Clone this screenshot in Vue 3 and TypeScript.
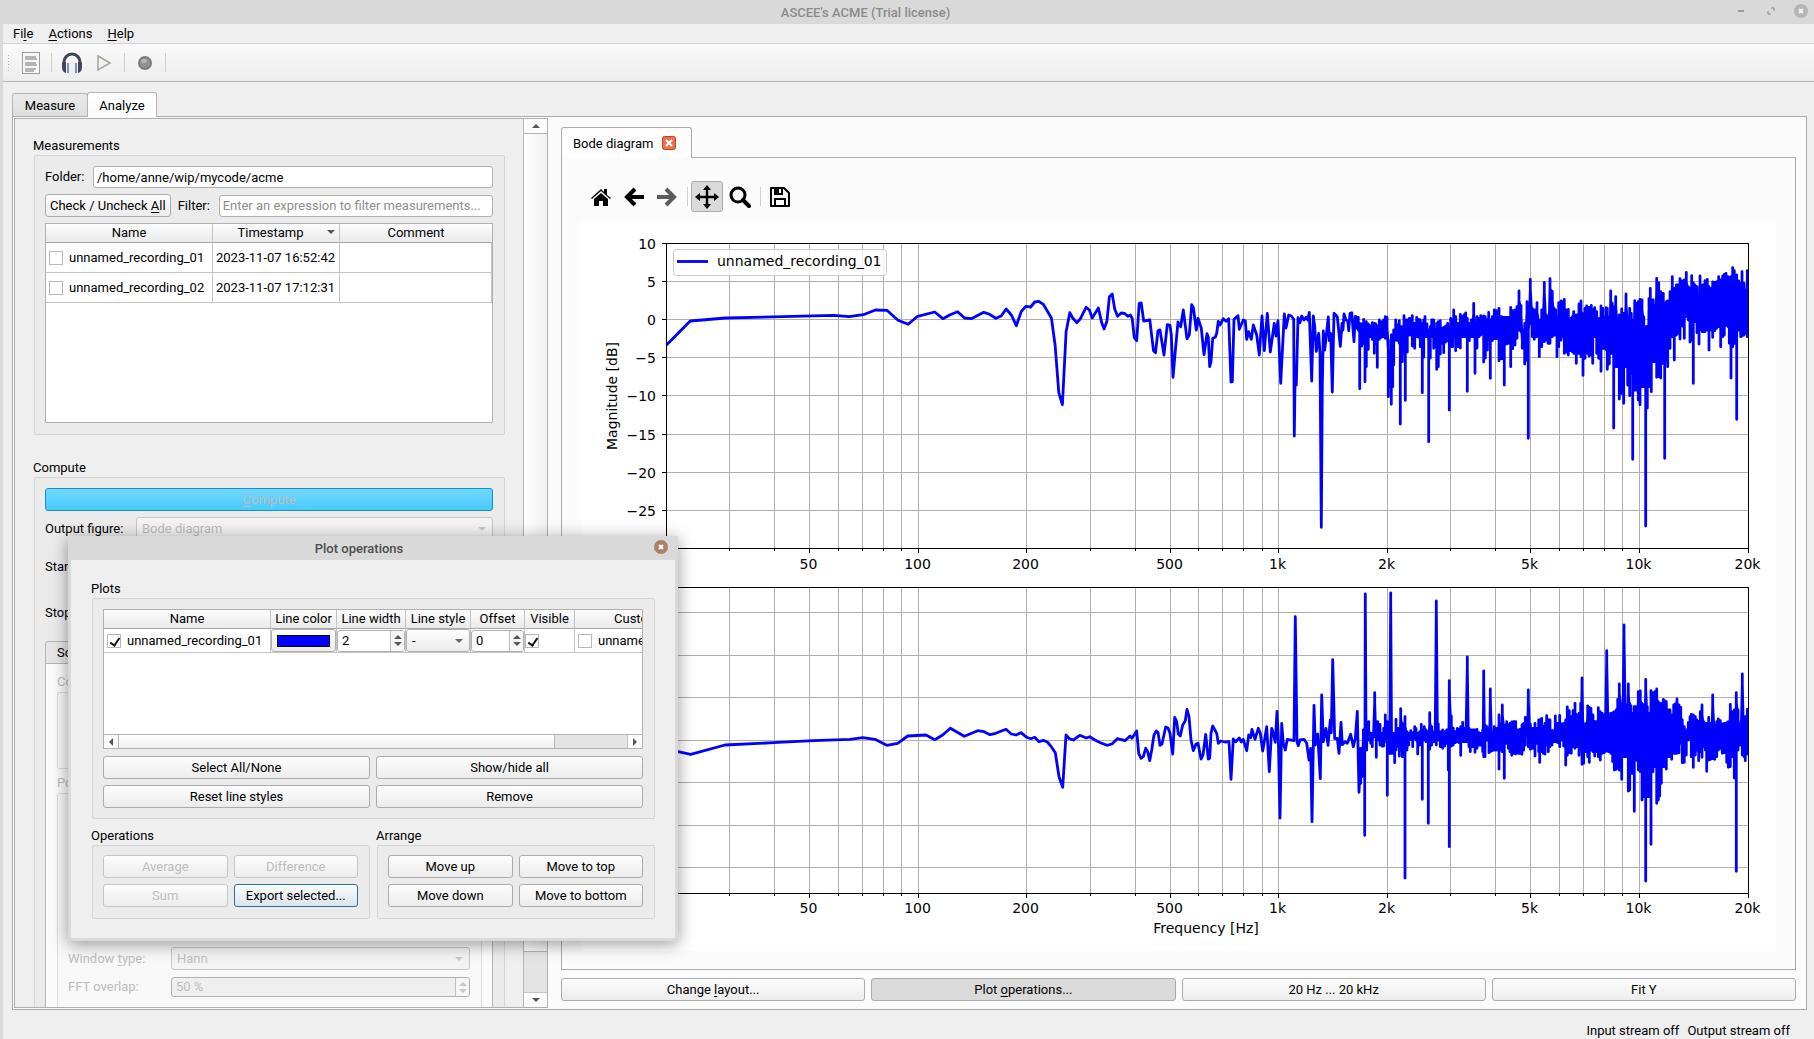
<script setup lang="ts">
import { ref } from 'vue'

type Pair = [number, number]

const LEFT = 666
const RIGHT = 1748
const DECADE = (RIGHT - LEFT) / 3

const freqX = (f: number): number =>
  Math.floor(LEFT + Math.log10(f / 20) * DECADE) + 0.5

const gridFreqs: number[] = [1, 2, 3, 4, 5, 6, 7, 8, 9]
  .flatMap((n) => [n * 10, n * 100, n * 1000])
  .filter((f) => f > 20)
  .concat([10000])

const majors: { f: number; label: string }[] = [
  { f: 50, label: '50' },
  { f: 100, label: '100' },
  { f: 200, label: '200' },
  { f: 500, label: '500' },
  { f: 1000, label: '1k' },
  { f: 2000, label: '2k' },
  { f: 5000, label: '5k' },
  { f: 10000, label: '10k' },
  { f: 20000, label: '20k' },
]
const isMajor = (f: number): boolean => majors.some((m) => m.f === f)

const magTicks: { y: number; label: string }[] = [
  { y: 243.5, label: '10' },
  { y: 281.5, label: '5' },
  { y: 319.5, label: '0' },
  { y: 357.5, label: '−5' },
  { y: 395.5, label: '−10' },
  { y: 434.5, label: '−15' },
  { y: 472.5, label: '−20' },
  { y: 510.5, label: '−25' },
]
const phaseTicks: number[] = [612.5, 655.5, 697.5, 740.5, 782.5, 825.5, 867.5]

// Samples are packed as integers: "x y" pairs for single samples,
// "x top bottom" triples for the dense upper part of the band.
const unpack = (s: string, n: number): number[][] => {
  const v = s.trim().split(/\s+/).map(Number)
  const out: number[][] = []
  for (let i = 0; i + n <= v.length; i += n) out.push(v.slice(i, i + n))
  return out
}
const line = (s: string, x0: number, y0: number, sx = 3): Pair[] =>
  unpack(s, 2).map(([x, y]) => [x0 + x / sx, y0 + y / 3])

// Every triple is a vertical stroke; a second stroke half way to the next one
// covers the range that both neighbours share.
const band = (s: string, x0: number, y0: number): Pair[] => {
  const cols = unpack(s, 3)
  return cols.flatMap(([x, t, b], i): Pair[] => {
    const px = x0 + x / 3
    const mid = y0 + (t + Math.min(b, t + 60)) / 6
    const out: Pair[] = [[px, mid], [px, y0 + t / 3], [px, y0 + b / 3], [px, mid]]
    const next = cols[i + 1]
    if (next) {
      const hx = x0 + (x + next[0]) / 6
      const top = Math.max(t, next[1])
      const bottom = Math.min(b, next[2])
      if (bottom > top) {
        out.push([hx, y0 + top / 3], [hx, y0 + bottom / 3], [hx, y0 + (top + bottom) / 6])
      }
    }
    return out
  })
}
const poly = (p: Pair[]): string =>
  p.map(([x, y]) => `${x.toFixed(1)},${y.toFixed(1)}`).join(' ')

const mag = poly([
  ...line(`310 705 368 633 455 624 720 616 757 620 792 614 822 600 850 601 877 631 902 643 925 619
  967 606 987 626 1005 614 1023 605 1040 624 1057 626 1087 607 1100 612 1117 625 1130 618 1142 597
  1155 615 1167 647 1179 605 1190 589 1202 591 1212 576 1222 574 1233 583 1253 624 1262 705 1271 848
  1280 884 1289 665 1298 608 1305 624 1315 638 1323 628 1338 592 1346 600 1353 624 1368 594 1376 637
  1382 657 1389 634 1395 560 1402 552 1408 597 1415 619 1424 609 1432 610 1440 619 1446 615 1451 625
  1456 683 1462 692 1468 580 1473 579 1479 633 1494 630 1503 722 1508 728 1514 662 1518 660`, 540, 110, 2.45),
  ...line(`0 330 12 405 22 314 30 316 34 345 39 472 47 380 54 306 62 320 70 270 81 356 88 345 95 254
  100 262 109 330 114 295 124 325 132 404 141 341 145 350 149 440 153 425 158 355 166 352 170 340
  175 304 180 315 190 296 198 304 206 296 213 486 217 485 222 298 234 287 238 328 250 300 256 302
  260 358 266 335 274 358 280 315 290 345 298 405 306 288 313 392 322 280 331 396 343 310 348 348
  354 302 362 490 373 282 378 324 386 285 394 288 401 298 403 648 405 490 409 495 414 293 420 308
  425 288 432 300 438 292 443 300 448 277 455 483 460 288 464 320 469 394 476 340 480 400 484 922
  487 500 490 333 494 390 505 291 508 362 512 340 517 516 522 280 532 290 541 379 546 310 549 330
  552 282 558 300 563 302 566 332 570 280 575 278 582 365 586 289`, 1160, 220),
  ...band(`588 290 325 595 292 330 599 310 506 605 312 378 611 298 370 615 320 485 619 305 440
  625 312 388 632 318 350 637 308 358 643 310 400 647 312 370 652 318 442 658 300 358 665 305 352
  671 300 350 676 290 355 681 292 350 685 360 530 691 400 500 694 345 553 698 345 500 701 330 435
  707 300 360 713 315 362 718 302 370 721 320 612 727 320 425 732 287 400 736 300 541 742 300 396
  748 295 345 757 287 378 764 310 385 770 292 350 776 298 352 781 300 380 787 310 518 791 300 412
  795 290 350 801 312 350 806 330 665 811 320 414 815 300 350 821 300 385 826 330 380 830 310 448
  835 305 440 841 302 402 846 325 370 851 322 398 857 318 366 863 310 362 868 320 570 872 295 380
  878 300 380 881 270 350 887 290 392 893 310 380 901 283 384 907 290 350 912 285 350 917 279 350
  922 295 514 928 310 362 934 300 350 941 250 350 945 310 460 951 290 384 957 295 350 962 287 345
  966 290 340 971 288 426 976 290 414 982 300 390 986 277 360 991 300 475 997 290 362 1003 270 356
  1009 272 356`, 1160, 220),
  ...band(`57 265 422 65 290 416 73 292 495 79 292 372 85 292 370 92 262 440 98 272 386 105 270 375
  111 260 355 117 213 330 123 256 335 127 330 385 134 310 432 141 245 420 145 300 655 151 178 310
  157 265 350 163 270 358 171 248 350 178 300 410 185 270 380 193 187 365 199 285 360 204 290 370
  210 176 370 217 214 350 222 265 345 227 270 345 231 290 410 236 248 380 243 243 360 248 245 350
  253 238 400 259 270 396 265 268 405 271 295 392 277 290 395 281 275 400 289 285 430 297 252 400
  303 243 410 309 282 466 315 265 415 320 258 400 327 262 408 334 256 405 338 268 430 344 263 350
  350 275 400 356 295 415 363 258 454 369 265 385 375 290 385 379 263 390 382 265 448 388 290 432
  392 213 400 397 250 400 401 260 624 407 230 440 413 300 440 418 285 537 425 267 520 431 280 550
  438 222 440 443 290 495 449 265 527 454 280 460 458 300 718 464 242 510 470 250 510 475 245 540
  480 238 554 486 240 500 491 290 500 497 320 918 502 320 564 507 235 500 511 205 500 514 240 515
  520 240 425 525 255 425 530 175 472 536 188 470 542 215 474 550 220 430 554 250 715 559 245 420
  563 243 440 570 215 385 577 170 350 583 205 420 589 195 345 594 195 340 600 176 357 607 183 318
  613 180 355 619 157 290 625 200 300 630 205 366 635 167 360 640 188 490 645 195 305 651 200 338
  657 220 372 660 168 330 667 195 335 675 182 335 682 178 330 687 200 390 694 205 330 698 186 352
  704 187 332 710 185 325 716 170 320 722 180 380 728 168 350 733 163 345 738 160 315 744 170 320
  748 173 370 753 170 474 758 143 380 763 152 370 770 165 598 776 183 330 782 190 350 786 155 348
  792 190 345 797 210 340 802 152 350`, 1480, 220),
])

const phase = poly([
  ...line(`20 568 54 575 92 583 195 555 340 548 460 542 570 538 608 533 645 538 680 556 713 550 743 528
  798 525 824 539 848 525 871 505 913 529 953 512 972 515 990 524 1007 520 1038 508 1054 522 1068 525
  1083 518 1100 532 1112 536 1124 532 1137 545 1150 541 1162 546 1174 560 1186 578 1197 650 1208 682
  1218 525 1228 536 1240 540 1259 526 1279 534 1289 530 1310 543 1323 549 1341 556 1356 552 1372 536
  1395 542 1410 528 1416 535 1430 513 1436 580 1443 595 1450 590 1457 565 1463 575 1469 602 1475 570
  1482 525 1489 513 1494 517`, 660, 560),
  ...line(`0 526 6 522 17 471 24 474 30 490 38 552 44 442 50 455 55 492 61 498 68 465 76 452 81 418
  87 440 93 510 100 542 108 522 114 520 123 567 129 555 137 493 145 567 149 565 153 490 158 468
  170 490 175 520 182 513 195 516 207 515 213 628 220 507 227 515 238 504 244 516 250 508 260 542
  266 495 272 503 276 478 285 508 295 475 301 490 308 543 320 470 328 605 335 475 340 490 346 517
  351 424 355 500 360 744 365 460 370 520 376 540 382 508 402 512 406 140 411 515 415 527 420 510
  432 508 440 520 447 570 452 535 456 755 462 406 466 525 473 492 481 626 485 375 490 515 498 475
  504 526 511 450 514 488 518 269 524 506 532 505 537 550 543 457 547 524 555 515 562 520 572 493
  580 530 586 505 592 424 597 667`, 1160, 570),
  ...band(`602 535 640 606 545 620 610 480 565 614 480 796 616 72 500 620 480 540 626 455 510
  632 490 520 637 490 530 644 368 500 649 480 562 653 455 510 660 463 525 666 490 528 671 475 528
  676 435 515 682 455 676 687 490 550 692 69 550 697 490 550 704 490 578 708 448 540 714 475 528
  718 480 558 722 416 540 727 460 560 731 490 560 735 440 924 741 485 540 746 490 525 752 482 508
  758 488 530 764 470 505 768 475 510 773 490 552 779 485 525 784 463 515 787 480 688 793 470 510
  798 480 515 805 485 760 809 428 538 815 470 525 822 485 515 829 93 525 835 462 510 841 485 530
  848 480 535 854 485 528 860 480 520 865 478 600 868 332 830 874 438 528 880 475 525 886 485 518
  892 475 515 897 478 518 902 470 556 908 457 515 914 475 515 922 261 515 927 475 530 931 480 545
  937 480 530 945 480 547 951 478 535 957 488 525 963 490 525 968 480 545 971 303 560 975 465 560
  981 470 510 987 480 548 991 357 545 997 485 542 1003 470 540 1010 475 540`, 1160, 570),
  ...band(`57 435 597 62 460 540 67 405 545 73 465 625 80 455 520 85 465 535 90 460 545 95 456 556
  101 455 550 107 455 552 114 480 550 120 478 550 126 465 553 131 460 540 136 442 525 141 450 500
  145 360 530 151 462 538 157 475 535 165 460 558 171 475 520 176 450 545 179 450 577 185 445 545
  190 470 550 195 460 552 200 437 525 205 450 545 210 450 530 216 482 525 221 482 515 226 438 515
  233 460 518 239 436 530 245 462 510 251 460 528 257 450 585 262 411 556 268 422 548 274 440 550
  279 422 530 285 400 535 291 435 530 297 430 556 302 400 540 306 324 583 311 465 580 317 460 545
  323 408 560 328 412 577 333 415 540 339 435 545 344 455 558 350 455 545 355 413 560 361 425 570
  367 430 550 373 435 548 380 242 543 386 432 545 392 430 550 398 428 575 403 425 600 409 420 598
  413 388 595 418 342 600 425 405 628 432 165 560 438 405 560 445 342 663 449 400 660 453 407 610
  458 430 610 463 410 724 469 410 570 475 365 600 481 363 605 486 400 690 491 405 680 497 328 933
  502 410 680 508 430 680 513 362 823 519 368 605 525 365 590 530 357 700 535 395 690 539 400 678
  544 400 640 550 388 590 555 393 590 559 395 597 565 420 560 570 420 560 575 435 568 581 405 550
  586 402 550 591 387 550 597 405 548 602 412 520 607 450 578 613 470 577 619 480 555 625 458 510
  630 440 508 634 433 560 640 435 592 646 440 555 651 450 540 656 455 572 661 425 545 666 405 562
  671 455 530 676 460 540 680 460 604 686 442 570 692 460 568 698 375 566 704 465 568 710 455 560
  715 447 540 721 452 535 727 462 550 733 460 548 740 458 577 745 455 592 751 403 590 757 425 560
  763 420 624 769 368 904 774 420 540 780 465 525 787 312 555 792 460 560 796 440 572 802 418 552`, 1480, 570),
])

const folder = ref('/home/anne/wip/mycode/acme')
const filter = ref('')
const recordings = ref([
  { name: 'unnamed_recording_01', time: '2023-11-07 16:52:42', on: false },
  { name: 'unnamed_recording_02', time: '2023-11-07 17:12:31', on: false },
])
const plot = ref({ on: true, width: '2', offset: '0', visible: true, custom: false })
</script>

<template>
  <div class="app">
    <header class="titlebar">
      <h1>ASCEE's ACME (Trial license)</h1>
      <div class="wm">
        <button aria-label="Minimize"><svg width="14" height="14"><path d="M4 7h6" stroke="#9a9a9a" stroke-width="2" /></svg></button>
        <button aria-label="Restore"><svg width="14" height="14"><path d="M7 4h3v3M4 7v3h3" fill="none" stroke="#8a8a8a" stroke-width="1" /></svg></button>
        <button aria-label="Close"><svg width="14" height="14"><circle cx="7" cy="7" r="7" fill="#b5b5b5" /><path d="M5 5l4 4M9 5l-4 4" stroke="#f2f2f2" stroke-width="2" /></svg></button>
      </div>
    </header>
    <nav class="menubar">
      <button>Fi<u>l</u>e</button>
      <button><u>A</u>ctions</button>
      <button><u>H</u>elp</button>
    </nav>
    <div class="toolbar">
      <i class="grip"></i>
      <button class="tool" aria-label="Log">
        <svg width="18" height="22"><rect x="0.5" y="0.5" width="17" height="21" fill="#f7f7f7" stroke="#9c9c9c" /><path d="M3 5h11M3 7h12M3 11h11M3 13h12M3 17h11M3 19h9" stroke="#b4b4b4" stroke-width="2" /></svg>
      </button>
      <i class="sep"></i>
      <button class="tool" aria-label="Monitor">
        <svg width="22" height="22" viewBox="0 0 22 22"><path d="M3 13V10a8 8 0 0 1 16 0v3" fill="none" stroke="#3f465c" stroke-width="3" /><path d="M1 11q1-2 4-1v11Q1 20 1 15zM21 11q-1-2-4-1v11q4-1 4-6z" fill="#3f465c" /><path d="M6 11h2v10H6zM14 11h2v10h-2z" fill="#8390ad" /></svg>
      </button>
      <button class="tool" aria-label="Play">
        <svg width="16" height="18"><path d="M2 2L14 9L2 16z" fill="#f4f4ee" stroke="#a3a3a0" stroke-width="1.5" /></svg>
      </button>
      <i class="sep"></i>
      <button class="tool" aria-label="Record">
        <svg width="16" height="16"><circle cx="8" cy="8" r="7" fill="#7c7c7c" /><circle cx="8" cy="8" r="5" fill="#929292" /><ellipse cx="7" cy="6" rx="3" ry="2" fill="#b5b5b5" /></svg>
      </button>
      <i class="sep"></i>
    </div>

    <div class="maintabs">
      <button class="mtab">Measure</button>
      <button class="mtab on">Analyze</button>
    </div>

    <main class="page">
      <section class="side">
        <div class="sidebody">
          <h2 class="glabel">Measurements</h2>
          <div class="group stack measure">
            <div class="row">
              <label for="folder">Folder:</label>
              <input id="folder" v-model="folder" class="field" type="text" />
            </div>
            <div class="row filter">
              <button class="btn">Check / Uncheck <u>A</u>ll</button>
              <label for="filter">Filter:</label>
              <input id="filter" v-model="filter" class="field" type="text" placeholder="Enter an expression to filter measurements..." />
            </div>
            <div class="tablebox">
              <table class="rec">
                <thead>
                  <tr><th class="c-name">Name</th><th class="c-time">Timestamp<i class="tri down"></i></th><th>Comment</th></tr>
                </thead>
                <tbody>
                  <tr v-for="r in recordings" :key="r.name">
                    <td><label class="check"><input v-model="r.on" type="checkbox" />{{ r.name }}</label></td>
                    <td class="time">{{ r.time }}</td>
                    <td></td>
                  </tr>
                </tbody>
              </table>
            </div>
          </div>

          <h2 class="glabel second">Compute</h2>
          <div class="group stack compute">
            <button class="btn primary" disabled><u>C</u>ompute</button>
            <div class="row">
              <label class="wide" for="outfig">Output figure:</label>
              <span class="combo grow"><select id="outfig" disabled><option>Bode diagram</option></select></span>
            </div>
            <div class="plain">Start</div>
            <div class="plain stop">Stop</div>
            <div class="subtabs">
              <button class="subtab">Sc</button>
              <div class="subpane">
                <h3 class="dim">Co</h3>
                <div class="group lite first"></div>
                <h3 class="dim next">Po</h3>
                <div class="group lite post">
                  <label for="win">Window <u>t</u>ype:</label>
                  <span class="combo"><select id="win" disabled><option>Hann</option></select></span>
                  <label for="ovl">FFT overlap:</label>
                  <span class="spin off"><input id="ovl" type="text" value="50 %" disabled /><span class="arrows"><i class="tri up"></i><i class="tri down"></i></span></span>
                </div>
              </div>
            </div>
          </div>
        </div>
        <div class="vbar" aria-hidden="true">
          <span class="cap"><i class="tri up"></i></span>
          <span class="thumb"></span>
          <span class="groove"></span>
          <span class="cap"><i class="tri down"></i></span>
        </div>
      </section>

      <section class="work">
        <div class="figtab">
          <span>Bode diagram</span>
          <button class="x" aria-label="Close tab"><svg width="14" height="14"><rect x="0.5" y="0.5" width="13" height="13" rx="2" fill="#e2744f" stroke="#d23c22" /><path d="M4 4l6 6M10 4l-6 6" stroke="#fff" stroke-width="2" /></svg></button>
        </div>
        <div class="figpane">
          <div class="figtools">
            <button aria-label="Home"><svg width="22" height="22" viewBox="0 0 22 22"><path d="M1 12L11 3l3 3V3h3v6l4 3-1 1-9-8-9 8z" /><path d="M4 13l7-6 7 6v7h-5v-5H9v5H4z" /></svg></button>
            <button aria-label="Back"><svg width="22" height="22" viewBox="0 0 22 22"><path d="M12 3L4 11l8 8M5 11h16" fill="none" stroke="#000" stroke-width="4" /></svg></button>
            <button aria-label="Forward"><svg width="22" height="22" viewBox="0 0 22 22"><path d="M10 3l8 8-8 8M17 11H1" fill="none" stroke="#5c5c5c" stroke-width="4" /></svg></button>
            <i class="sep"></i>
            <button class="down" aria-label="Pan"><svg width="24" height="24" viewBox="0 0 24 24"><path d="M12 3v18M3 12h18" stroke="#000" stroke-width="2.4" /><path d="M12 0l4 5H8zM12 24l4-5H8zM0 12l5-4v8zM24 12l-5-4v8z" /></svg></button>
            <button aria-label="Zoom"><svg width="22" height="22" viewBox="0 0 22 22"><circle cx="9" cy="9" r="7" fill="none" stroke="#000" stroke-width="3" /><path d="M14 14l6 6" stroke="#000" stroke-width="4" stroke-linecap="round" /></svg></button>
            <i class="sep"></i>
            <button aria-label="Save"><svg width="22" height="22" viewBox="0 0 22 22"><path d="M2 2h13l5 5v13H2z" fill="none" stroke="#000" stroke-width="2" stroke-linejoin="round" /><path d="M5 2h9v7H5z" /><path d="M10 3h2v4h-2z" fill="#fff" /><path d="M6 20v-7h10v7" fill="none" stroke="#000" stroke-width="2" /></svg></button>
          </div>
          <svg class="canvas" viewBox="581 222 1195 729" role="img" aria-label="Bode diagram">
            <g stroke="#b0b0b0">
              <template v-for="f in gridFreqs" :key="f">
                <line :x1="freqX(f)" :x2="freqX(f)" y1="244" y2="548" />
                <line :x1="freqX(f)" :x2="freqX(f)" y1="588" y2="893" />
              </template>
              <line v-for="t in magTicks" :key="t.y" x1="667" x2="1748" :y1="t.y" :y2="t.y" />
              <line v-for="y in phaseTicks" :key="y" x1="667" x2="1748" :y1="y" :y2="y" />
            </g>
            <g stroke="#000">
              <template v-for="f in gridFreqs" :key="f">
                <line :x1="freqX(f)" :x2="freqX(f)" y1="548" :y2="isMajor(f) ? 553 : 551" />
                <line :x1="freqX(f)" :x2="freqX(f)" y1="893" :y2="isMajor(f) ? 898 : 896" />
              </template>
              <path d="M1748.5 548v5M1748.5 893v5" />
              <line v-for="t in magTicks" :key="t.y" x1="662" x2="667" :y1="t.y" :y2="t.y" />
            </g>
            <polyline class="trace" :points="mag" />
            <polyline class="trace" :points="phase" />
            <rect class="frame" x="666.5" y="243.5" width="1082" height="305" />
            <rect class="frame" x="666.5" y="587.5" width="1082" height="306" />
            <rect x="673.5" y="249.5" width="213" height="26" rx="3" fill="#fff" fill-opacity="0.8" stroke="#ccc" />
            <path class="trace" d="M677 261.5h31" />
            <text x="717" y="266">unnamed_recording_01</text>
            <g text-anchor="end">
              <text v-for="t in magTicks" :key="t.y" x="656" :y="t.y + 5">{{ t.label }}</text>
            </g>
            <g text-anchor="middle">
              <template v-for="m in majors" :key="m.f">
                <text :x="freqX(m.f) - 1" y="569">{{ m.label }}</text>
                <text :x="freqX(m.f) - 1" y="913">{{ m.label }}</text>
              </template>
              <text x="1206" y="933">Frequency [Hz]</text>
              <text transform="translate(617 396) rotate(-90)">Magnitude [dB]</text>
            </g>
          </svg>
        </div>
        <div class="actions">
          <button class="btn">Change <u>l</u>ayout...</button>
          <button class="btn pressed">Plot <u>o</u>perations...</button>
          <button class="btn">20 Hz ... 20 kHz</button>
          <button class="btn">Fit Y</button>
        </div>
      </section>
    </main>

    <footer class="status"><span>Input stream off</span><span>Output stream off</span></footer>

    <div class="dialog" role="dialog" aria-labelledby="dlg-title">
      <header class="dlgbar">
        <h2 id="dlg-title">Plot operations</h2>
        <button class="x" aria-label="Close"><svg width="14" height="14"><circle cx="7" cy="7" r="7" fill="#a98268" /><path d="M5 5l4 4M9 5l-4 4" stroke="#fff" stroke-width="2" /></svg></button>
      </header>
      <div class="dlgbody">
        <h3 class="glabel">Plots</h3>
        <div class="group stack">
          <div class="plotbox">
            <table class="plots">
              <thead>
                <tr>
                  <th class="p1">Name</th><th class="p2">Line color</th><th class="p3">Line width</th><th class="p4">Line style</th><th class="p5">Offset</th><th class="p6">Visible</th><th class="p7">Custo</th>
                </tr>
              </thead>
              <tbody>
                <tr>
                  <td><label class="check"><input v-model="plot.on" type="checkbox" />unnamed_recording_01</label></td>
                  <td><button class="color" aria-label="Line color"><i></i></button></td>
                  <td><span class="spin"><input v-model="plot.width" type="text" aria-label="Line width" /><span class="arrows"><i class="tri up"></i><i class="tri down"></i></span></span></td>
                  <td><span class="combo"><select aria-label="Line style"><option>-</option></select></span></td>
                  <td><span class="spin"><input v-model="plot.offset" type="text" aria-label="Offset" /><span class="arrows"><i class="tri up"></i><i class="tri down"></i></span></span></td>
                  <td><label class="check bare"><input v-model="plot.visible" type="checkbox" aria-label="Visible" /></label></td>
                  <td><label class="check"><input v-model="plot.custom" type="checkbox" />unname</label></td>
                </tr>
              </tbody>
            </table>
            <div class="hbar" aria-hidden="true">
              <span class="cap"><i class="tri left"></i></span><span class="thumb"></span><span class="groove"></span><span class="cap"><i class="tri right"></i></span>
            </div>
          </div>
          <div class="pair">
            <button class="btn">Select All/None</button>
            <button class="btn">Show/hide all</button>
            <button class="btn">Reset line styles</button>
            <button class="btn">Remove</button>
          </div>
        </div>
        <div class="halves">
          <div>
            <h3 class="glabel">Operations</h3>
            <div class="group pair">
              <button class="btn" disabled>Average</button>
              <button class="btn" disabled>Difference</button>
              <button class="btn" disabled>Sum</button>
              <button class="btn focus">Export selected...</button>
            </div>
          </div>
          <div>
            <h3 class="glabel">Arrange</h3>
            <div class="group pair">
              <button class="btn">Move up</button>
              <button class="btn">Move to top</button>
              <button class="btn">Move down</button>
              <button class="btn">Move to bottom</button>
            </div>
          </div>
        </div>
      </div>
    </div>
  </div>
</template>

<style>
html, body { margin: 0; background: #efefef; }
</style>

<style scoped>
.app, .app * { box-sizing: border-box; }
.app {
  position: relative; display: flex; flex-direction: column; height: 100vh; overflow: hidden;
  border-left: 3px solid #d9d9d9; background: #efefef; color: #000;
  font: 13px/20px Roboto, "Noto Sans", sans-serif;
}
h1, h2, h3 { margin: 0; font-size: 13px; font-weight: 400; line-height: 20px; }
button, input, select { margin: 0; font: inherit; color: inherit; }
button { padding: 0; border: 0; background: none; white-space: nowrap; }
u { text-underline-offset: 2px; }
svg { display: block; }

.titlebar { position: relative; height: 24px; flex: none; background: #d9d9d9; text-align: center; }
.titlebar h1 { line-height: 26px; font-weight: 500; color: #8b8b8b; padding-right: 86px; }
.wm { position: absolute; right: 6px; top: 4px; display: flex; gap: 16px; }
.menubar { display: flex; flex: none; gap: 15px; height: 20px; padding-left: 10px; border-bottom: 1px solid #d2d2d2; }
.toolbar { display: flex; flex: none; align-items: center; gap: 8px; height: 38px; padding-left: 4px; border-bottom: 1px solid #b4b4b4; background: linear-gradient(#fafafa, #ededed); }
.grip { width: 4px; height: 17px; background: radial-gradient(circle, #b5b5b5 1px, transparent 1px) 0 0 / 3px 3px; }
.tool { display: grid; place-items: center; width: 24px; height: 26px; }
.sep { width: 1px; height: 19px; background: #cfcfcf; }

.maintabs { display: flex; flex: none; align-items: flex-end; height: 34px; padding-left: 9px; }
.mtab { height: 23px; width: 76px; padding-top: 2px; border: 1px solid #b4b4b4; border-bottom: 0; border-radius: 3px 3px 0 0; background: linear-gradient(#eaeaea, #dedede); line-height: 20px; }
.mtab.on { position: relative; z-index: 1; width: 70px; height: 25px; margin: 0 0 -1px -1px; background: linear-gradient(#fff, #fbfbfb); }

.page { display: flex; flex: 1; min-height: 0; margin: 0 7px 0 9px; border: 1px solid #ababab; background: #fbfbfb; }
.side { display: flex; flex: none; width: 534px; margin: 1px; border: 1px solid #b0b0b0; background: #efefef; overflow: hidden; }
.sidebody { flex: 1; min-width: 0; padding: 16px 18px 0; overflow: hidden; }
.vbar { display: flex; flex-direction: column; width: 24px; border-left: 1px solid #b4b4b4; }
.vbar .cap { display: grid; place-items: center; height: 14px; background: #fbfbfb; }
.vbar .thumb { flex: 821; border: solid #b4b4b4; border-width: 1px 0; background: linear-gradient(90deg, #fff, #f0f0f0); }
.vbar .groove { flex: 40; border-bottom: 1px solid #c4c4c4; background: #e4e4e4; }

.tri { width: 0; height: 0; border: 4px solid transparent; }
.tri.up { border-bottom-color: #555; border-top: 0; }
.tri.down { border-top-color: #555; border-bottom: 0; }
.tri.left { border-right-color: #555; border-left: 0; }
.tri.right { border-left-color: #555; border-right: 0; }

.glabel { height: 20px; line-height: 22px; }
.group { margin-left: 1px; padding: 10px 11px 10px 10px; border: 1px solid #d5d5d5; border-radius: 2px; background: #ebebeb; }
.stack { display: flex; flex-direction: column; gap: 6px; }
.measure { padding-bottom: 11px; }
.second { margin-top: 22px; }
.row { display: flex; align-items: center; gap: 7px; height: 23px; }
.row label { flex: none; min-width: 41px; }
.row.filter label { min-width: 34px; }
.row .wide { min-width: 84px; }
.measure .row:first-child { height: 22px; }
.field { flex: 1; min-width: 0; height: 22px; padding: 0 3px; border: 1px solid #b0b0b0; border-radius: 3px; background: #fff; outline: 0; }
.field::placeholder { color: #8e8e8e; opacity: 1; }
.btn { height: 23px; padding: 0 4px; border: 1px solid #ababab; border-radius: 3px; background: linear-gradient(#fdfdfd, #ececec); line-height: 21px; }
.btn:disabled { border-color: #c6c6c6; color: #bdbdbd; }
.btn.primary { border-color: #1491ca; background: linear-gradient(#70d8ff, #48cbfd); }
.btn.pressed { background: #dadada; }
.btn.focus { border-color: #306f99; background: linear-gradient(#fbfcfd, #dbe4ec); }

.tablebox { height: 200px; border: 1px solid #b0b0b0; background: #fff; }
table { border-collapse: separate; border-spacing: 0; table-layout: fixed; width: 100%; }
th { height: 19px; padding: 0; border: solid #c4c4c4; border-width: 0 1px 1px 0; border-bottom-color: #a8a8a8; background: linear-gradient(#fcfcfc, #eaeaea); font-weight: 400; line-height: 18px; }
td { padding: 0; border: solid #c4c4c4; border-width: 0 1px 1px 0; }
.rec td { height: 30px; }
.rec th:last-child { border-right: 0; }
.c-name { width: 167px; }
.c-time { position: relative; width: 127px; padding-right: 11px; }
.c-time .tri { position: absolute; right: 4px; top: 6px; }
.time { padding-left: 3px; white-space: nowrap; }
.check { display: flex; align-items: center; gap: 6px; padding-left: 3px; white-space: nowrap; overflow: hidden; }
.check.bare { padding-left: 0; }
.check input { position: relative; flex: none; appearance: none; width: 14px; height: 14px; border: 1px solid #b8b8b8; background: #fff; }
.check input:checked::after { content: ""; position: absolute; left: 4px; top: 1px; width: 4px; height: 8px; border: solid #111; border-width: 0 2px 2px 0; transform: rotate(35deg); }

.combo { position: relative; display: block; height: 23px; }
.combo.grow { flex: 1; }
.combo select { appearance: none; width: 100%; height: 100%; padding: 0 5px; border: 1px solid #b0b0b0; border-radius: 3px; background: linear-gradient(#fdfdfd, #ececec); }
.combo::after { content: ""; position: absolute; right: 7px; top: 10px; border: 4px solid transparent; border-top-color: #666; border-bottom: 0; }
.combo select:disabled { border-color: #c6c6c6; background: #f3f3f3; color: #bdbdbd; opacity: 1; }
.combo:has(select:disabled)::after { border-top-color: #c8c8c8; }
.spin { display: flex; height: 22px; border: 1px solid #b0b0b0; border-radius: 3px; background: #fff; overflow: hidden; }
.spin input { flex: 1; width: 0; min-width: 0; padding: 0 4px; border: 0; background: none; }
.spin .arrows { display: flex; flex-direction: column; align-items: center; justify-content: center; gap: 3px; width: 14px; border-left: 1px solid #c0c0c0; background: #f6f6f6; }
.spin .arrows .up { border-top-width: 0; }
.spin .arrows .down { border-bottom-width: 0; }
.spin.off { height: 20px; background: #efefef; color: #bdbdbd; }
.spin.off .up { border-bottom-color: #c8c8c8; }
.spin.off .down { border-top-color: #c8c8c8; }

.plain { margin-top: 11px; }
.plain.stop { margin-top: 20px; }
.subtabs { margin-top: 12px; }
.subtab { display: block; position: relative; width: 90px; height: 23px; padding-left: 11px; border: 1px solid #b4b4b4; border-radius: 3px 3px 0 0; background: #e6e6e6; text-align: left; }
.subpane { margin-top: -1px; padding: 8px 10px 80px 11px; border: 1px solid #b4b4b4; background: #fbfbfb; }
.dim { color: #bdbdbd; }
.next { margin-top: 4px; }
.lite { margin-left: 0; border-color: #dcdcdc; background: #f8f8f8; }
.first { height: 77px; }
.post { display: grid; grid-template-columns: 103px 1fr; align-items: center; gap: 7px 0; padding-top: 153px; padding-bottom: 60px; color: #bdbdbd; }

.work { display: flex; flex: 1; flex-direction: column; min-width: 0; padding: 10px 10px 8px 12px; }
.figtab { display: flex; flex: none; position: relative; z-index: 1; align-items: center; justify-content: space-between; width: 131px; height: 31px; margin-bottom: -1px; padding: 0 15px 0 11px; border: 1px solid #ababab; border-bottom: 0; border-radius: 3px 3px 0 0; background: #fdfdfd; line-height: 21px; }
.figpane { display: flex; flex: 1; flex-direction: column; min-height: 0; padding: 23px 19px 18px; border: 1px solid #ababab; }
.figtools { display: flex; flex: none; align-items: center; gap: 1px; height: 31px; margin: 0 0 10px 4px; }
.figtools button { display: grid; place-items: center; width: 32px; height: 31px; border: 1px solid transparent; border-radius: 3px; }
.figtools .down { border-color: #ababab; background: #dadada; }
.figtools .sep { margin: 0 2px 0 3px; }
.canvas { flex: 1; width: 100%; min-height: 0; background: #fff; }
.canvas text { font: 14px "DejaVu Sans", sans-serif; fill: #000; }
.trace { fill: none; stroke: #00f; stroke-width: 2.8; stroke-linejoin: round; stroke-linecap: butt; }
.frame { fill: none; stroke: #000; }
.actions { display: grid; flex: none; grid-template-columns: repeat(4, 1fr); gap: 6px; margin-top: 8px; }

.status { display: flex; flex: none; justify-content: flex-end; align-items: flex-end; gap: 8px; height: 29px; padding-right: 24px; line-height: 16px; }

.dialog { position: absolute; left: 65px; top: 536px; width: 610px; border: solid #d9d9d9; border-width: 0 3px 3px; background: #efefef; box-shadow: 0 3px 16px rgba(0, 0, 0, 0.4); }
.dlgbar { position: relative; height: 24px; background: #d9d9d9; text-align: center; }
.dlgbar h2 { line-height: 26px; font-weight: 500; color: #4d4d4d; padding-right: 28px; }
.dlgbar .x { position: absolute; right: 7px; top: 4px; }
.dlgbody { padding: 18px 20px 19px; }
.plotbox { display: flex; flex-direction: column; height: 140px; border: 1px solid #b0b0b0; background: #fff; overflow: hidden; }
.plots td { height: 24px; }
.plots th:last-child, .plots td:last-child { border-right: 0; }
.p1 { width: 167px; }
.p2 { width: 66px; }
.p3 { width: 69px; }
.p4 { width: 65px; }
.p5 { width: 54px; }
.p6 { width: 50px; }
.p7 { padding-left: 39px; text-align: left; overflow: hidden; }
.color { display: block; width: 100%; height: 23px; padding: 5px; border: 1px solid #b0b0b0; border-radius: 3px; background: linear-gradient(#fdfdfd, #ececec); }
.color i { display: block; height: 12px; border: 1px solid #000; background: #00f; }
.hbar { display: flex; height: 14px; margin-top: auto; border-top: 1px solid #b4b4b4; }
.hbar .cap { display: grid; place-items: center; width: 14px; background: #fbfbfb; }
.hbar .thumb { flex: 438; border: solid #b4b4b4; border-width: 0 1px; background: linear-gradient(#fff, #f0f0f0); }
.hbar .groove { flex: 73; border-right: 1px solid #c4c4c4; background: #e4e4e4; }
.pair { display: grid; grid-template-columns: 1fr 1fr; gap: 6px; }
.dlgbody .pair { margin-top: 1px; }
.halves { display: grid; grid-template-columns: 1fr 1fr; gap: 6px; margin-top: 6px; }
.halves .group.pair { margin-top: 0; padding-top: 9px; padding-bottom: 11px; }
</style>
